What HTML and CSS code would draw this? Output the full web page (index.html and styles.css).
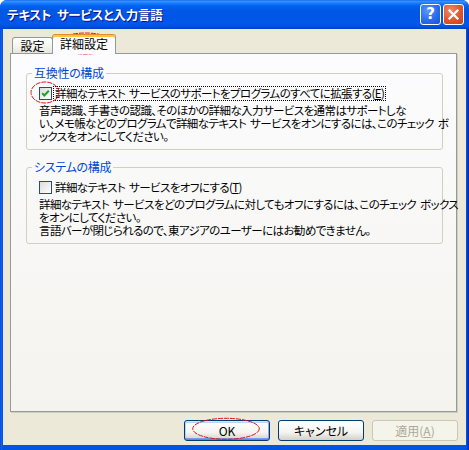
FILE: index.html
```html
<!DOCTYPE html>
<html lang="ja">
<head>
<meta charset="utf-8">
<title>テキスト サービスと入力言語</title>
<link rel="stylesheet" href="styles.css">
</head>
<body>
<div class="window">
  <div class="titlebar">
    <span class="title">テキスト サービスと入力言語</span>
    <div class="tb-buttons">
      <span class="tb-btn help">?</span>
      <span class="tb-btn close"><svg width="13" height="13" viewBox="0 0 13 13"><path d="M2.5 2.5 L10.5 10.5 M10.5 2.5 L2.5 10.5" stroke="#fff" stroke-width="2.2" stroke-linecap="square"/></svg></span>
    </div>
  </div>
  <div class="client">
    <div class="tabs">
      <div class="tab">設定</div>
      <div class="tab active">詳細設定</div>
    </div>
    <div class="panel">
      <fieldset class="group">
        <legend>互換性の構成</legend>
        <div class="check-row">
          <span class="checkbox"><svg width="11" height="11" viewBox="0 0 11 11"><path d="M2.2 5.2 L4.3 7.5 L8.8 2.8" fill="none" stroke="#21A121" stroke-width="2"/></svg></span>
          <span class="check-label focus">詳細なテキスト サービスのサポートをプログラムのすべてに拡張する(<u>E</u>)</span>
        </div>
        <p class="desc">音声認識、手書きの認識、そのほかの詳細な入力サービスを通常はサポートしな<br>い、メモ帳などのプログラムで詳細なテキスト サービスをオンにするには、このチェック ボ<br>ックスをオンにしてください。</p>
      </fieldset>
      <fieldset class="group second">
        <legend>システムの構成</legend>
        <div class="check-row">
          <span class="checkbox"></span>
          <span class="check-label">詳細なテキスト サービスをオフにする(<u>T</u>)</span>
        </div>
        <p class="desc">詳細なテキスト サービスをどのプログラムに対してもオフにするには、このチェック ボックス<br>をオンにしてください。<br>言語バーが閉じられるので、東アジアのユーザーにはお勧めできません。</p>
      </fieldset>
    </div>
    <div class="buttons">
      <button class="btn default">OK</button>
      <button class="btn">キャンセル</button>
      <button class="btn disabled">適用(<u>A</u>)</button>
    </div>
  </div>
  <svg class="annot" width="469" height="450" viewBox="0 0 469 450">
    <ellipse cx="85.5" cy="43.5" rx="28.5" ry="10.5"/>
    <ellipse cx="45" cy="92.5" rx="14" ry="10.5"/>
    <ellipse cx="226" cy="428.8" rx="33.3" ry="10.5"/>
  </svg>
</div>
</body>
</html>
```
FILE: styles.css
```css
* { box-sizing: border-box; }
html, body { margin: 0; padding: 0; }
body {
  width: 469px;
  height: 450px;
  overflow: hidden;
  background: #fff;
  font-family: "Noto Sans CJK JP", "Noto Sans", sans-serif;
  font-size: 11.5px;
  letter-spacing: -0.6px;
  word-spacing: 2px;
  font-feature-settings: "palt";
  color: #000;
}
.window {
  position: relative;
  width: 469px;
  height: 450px;
  display: flex;
  flex-direction: column;
  border-radius: 7px 7px 0 0;
  background: linear-gradient(to right, #0831D9 0, #1668F0 1px, #0058E8 2px, #0055E5 3px, #0055E5 466px, #0048D8 467px, #0030B8 468px);
}
.titlebar {
  height: 29px;
  flex: none;
  display: flex;
  align-items: center;
  justify-content: space-between;
  padding: 0 5px 0 7px;
  border-radius: 7px 7px 0 0;
  background: linear-gradient(to bottom, #0A5EEA 0px, #3D95FF 1px, #2A8BFF 2px, #0F72FC 4px, #0262EF 6px, #0058E6 10px, #0055E5 18px, #0058EB 24px, #004FDA 27px, #0040C6 29px);
}
.title {
  color: #fff;
  font-weight: bold;
  font-size: 12.5px;
  letter-spacing: -0.2px;
  word-spacing: 3px;
  line-height: 16px;
  text-shadow: 1px 1px 0 #0F1089;
  margin-top: 1px;
  white-space: nowrap;
}
.tb-buttons { display: flex; gap: 2px; }
.tb-btn {
  width: 21px;
  height: 21px;
  border: 1px solid #fff;
  border-radius: 3px;
  display: flex;
  align-items: center;
  justify-content: center;
  color: #fff;
  letter-spacing: 0;
}
.help {
  background: radial-gradient(circle at 35% 30%, #5C96FF 0, #2A6BF0 55%, #1B50D8 100%);
  font-family: "DejaVu Sans", sans-serif;
  font-weight: bold;
  font-size: 15px;
  line-height: 19px;
}
.close {
  background: radial-gradient(circle at 35% 30%, #F08B63 0, #E0552D 55%, #C6401A 100%);
}
.client {
  flex: 1;
  margin: 0 3px 5px 3px;
  background: #ECE9D8;
  padding: 5px 9px 0 7px;
  display: flex;
  flex-direction: column;
}
.tabs {
  display: flex;
  align-items: flex-end;
  height: 20px;
  padding-left: 2px;
  margin-bottom: -1px;
  position: relative;
  z-index: 1;
}
.tab {
  width: 41px;
  height: 16px;
  margin-bottom: 1px;
  border: 1px solid #919B9C;
  border-bottom: none;
  border-radius: 3px 3px 0 0;
  background: linear-gradient(#FFFFFF, #F3F3EF 60%, #E6E5DC);
  text-align: center;
  line-height: 14px;
  padding-top: 1px;
  font-size: 12px;
  letter-spacing: 0;
}
.tab.active {
  width: 64px;
  height: 20px;
  margin-bottom: 0;
  margin-left: -1px;
  background: #FCFCFE;
  border-top: 1px solid #E68B2C;
  box-shadow: inset 0 2px 0 #FFC73C;
  padding-top: 2px;
}
.panel {
  height: 359px;
  flex: none;
  border: 1px solid #919B9C;
  background: linear-gradient(#FCFCFE, #F4F3EE);
  box-shadow: 1px 1px 0 #D0CDBF;
  padding: 12px 13px 0 15px;
}
.group {
  margin: 0;
  border: 1px solid #D0D0BF;
  border-radius: 3px;
  padding: 0 12px 6px 12px;
  min-width: 0;
}
.group.second { margin-top: 10px; }
.group legend {
  color: #0046D5;
  line-height: 14px;
  padding: 0 2px;
  margin-left: -7px;
  font-size: 12px;
  letter-spacing: -0.3px;
}
.check-row {
  display: flex;
  align-items: center;
  gap: 2px;
  margin-top: 6px;
  height: 14px;
}
.checkbox {
  width: 13px;
  height: 13px;
  flex: none;
  border: 1px solid #1C5180;
  background: linear-gradient(135deg, #DCDCD7, #FFFFFF);
  display: flex;
  align-items: center;
  justify-content: center;
}
.check-label {
  line-height: 13px;
  padding: 0 1px;
  white-space: nowrap;
}
.check-label.focus { outline: 1px dotted #000; }
.desc {
  margin: 4px 0 0 0;
  line-height: 13px;
  white-space: nowrap;
}
.buttons {
  display: flex;
  justify-content: flex-end;
  gap: 8px;
  margin-top: 8px;
  margin-right: -1px;
}
.btn {
  width: 86px;
  height: 21px;
  border: 1px solid #003C74;
  border-radius: 3px;
  background: linear-gradient(#FFFFFF, #F4F4F0 60%, #D6D0C5);
  font-family: inherit;
  font-size: 12px;
  letter-spacing: 0;
  font-feature-settings: "palt";
  color: #000;
  padding: 0;
  line-height: 17px;
}
.btn.default {
  box-shadow: inset 0 1px 0 #CEE7FF, inset 0 -1px 0 #6982EE, inset 1px 0 0 #B8D2FA, inset -1px 0 0 #89ADE4, inset 0 2px 0 #BCD4F6, inset 0 -2px 0 #7D99F1;
}
.btn.disabled {
  border-color: #C9C7BA;
  background: #F5F4EA;
  color: #ACA899;
}
.annot {
  position: absolute;
  left: 0;
  top: 0;
  pointer-events: none;
}
.annot ellipse {
  fill: none;
  stroke: #E81010;
  stroke-width: 1;
  stroke-dasharray: 5 1;
}
```
